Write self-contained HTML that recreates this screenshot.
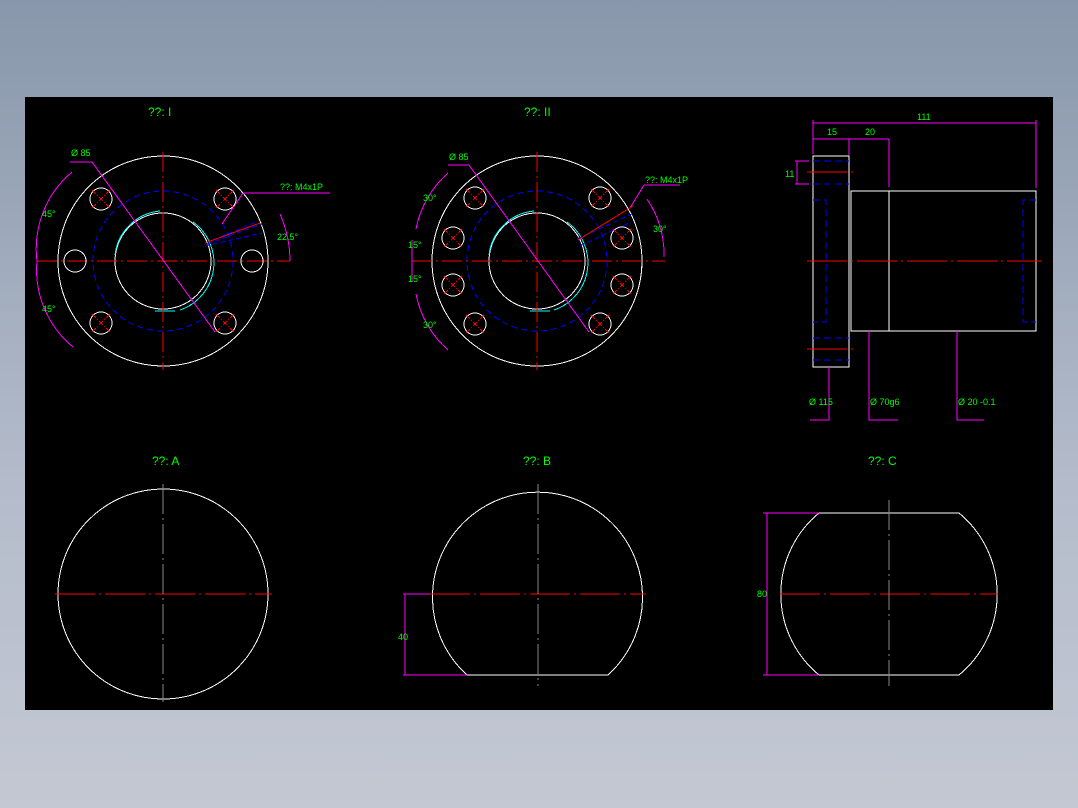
<!DOCTYPE html>
<html><head><style>
html,body{margin:0;padding:0;width:1078px;height:808px;overflow:hidden;background:linear-gradient(#8897ab,#b4bccb 60%,#c3c8d3);}
svg{position:absolute;left:0;top:0}
text{font-family:"Liberation Sans",sans-serif;fill:#00ff00;font-size:9px}
.t{font-size:12px}
</style></head><body>
<svg width="1078" height="808" viewBox="0 0 1078 808" shape-rendering="crispEdges">
<rect x="25" y="97" width="1028" height="613" fill="#000"/>
<defs>
<g id="hole"><circle r="11" fill="none" stroke="#fff"/><path d="M-9 -9L9 9M9 -9L-9 9" stroke="#f00" stroke-dasharray="5 2 1 2"/></g>
</defs>
<!-- View I -->
<text class="t" x="148" y="116">??: I</text>
<g fill="none">
<circle cx="163" cy="261" r="105" stroke="#fff"/>
<circle cx="163" cy="261" r="70" stroke="#00f" stroke-dasharray="6 4"/>
<circle cx="163" cy="261" r="48" stroke="#fff"/>
<path d="M115 255A50 50 0 0 1 160 211M193 222A50 50 0 0 1 180 310 M155 311L175 311" stroke="#0ff"/>
<path d="M37 261H290M163 152V370" stroke="#f00" stroke-dasharray="20 4 2 4"/>
<path d="M70 162H92L215 332" stroke="#f0f"/>
<path d="M72 172A100 100 0 0 0 37 261A100 100 0 0 0 73 347" stroke="#f0f"/>
<path d="M243 193H330M243 193L222 224" stroke="#f0f"/>
<path d="M280 214A120 120 0 0 1 290 261" stroke="#f0f"/>
<path d="M207 244L262 224M205 246L262 233M213 240L256 222" stroke="#00f" stroke-dasharray="5 3"/>
<path d="M205 243L260 223" stroke="#f00"/>
</g>
<use href="#hole" x="101" y="199"/><use href="#hole" x="225" y="199"/>
<use href="#hole" x="101" y="323"/><use href="#hole" x="225" y="323"/>
<g fill="none" stroke="#fff"><circle cx="75" cy="261" r="11"/><circle cx="252" cy="261" r="11"/></g>
<text x="71" y="156">Ø 85</text>
<text x="280" y="190">??: M4x1P</text>
<text x="277" y="240">22.5°</text>
<text x="42" y="217">45°</text><text x="42" y="312">45°</text>
<!-- View II -->
<text class="t" x="524" y="116">??: II</text>
<g fill="none">
<circle cx="537" cy="261" r="105" stroke="#fff"/>
<circle cx="537" cy="261" r="70" stroke="#00f" stroke-dasharray="6 4"/>
<circle cx="537" cy="261" r="48" stroke="#fff"/>
<path d="M489 255A50 50 0 0 1 534 211M567 222A50 50 0 0 1 554 310M530 311L550 311" stroke="#0ff"/>
<path d="M412 261H665M537 152V370" stroke="#f00" stroke-dasharray="20 4 2 4"/>
<path d="M448 165H469L589 332" stroke="#f0f"/>
<path d="M448 173A100 100 0 0 0 416 229M412 240V282M416 294A100 100 0 0 0 448 350" stroke="#f0f"/>
<path d="M644 185H680M644 185L630 208M647 199A100 100 0 0 1 664 257" stroke="#f0f"/>
<path d="M577 239L632 214M580 246L631 222" stroke="#00f" stroke-dasharray="5 3"/>
<path d="M578 240L633 206" stroke="#f00"/>
</g>
<use href="#hole" x="475" y="198"/><use href="#hole" x="600" y="198"/>
<use href="#hole" x="475" y="324"/><use href="#hole" x="600" y="324"/>
<use href="#hole" x="453" y="238"/><use href="#hole" x="622" y="238"/>
<use href="#hole" x="453" y="285"/><use href="#hole" x="622" y="285"/>
<text x="449" y="160">Ø 85</text>
<text x="645" y="183">??: M4x1P</text>
<text x="423" y="201">30°</text><text x="423" y="328">30°</text>
<text x="408" y="248">15°</text><text x="408" y="282">15°</text>
<text x="653" y="232">30°</text>
<!-- Side view -->
<g fill="none">
<rect x="813" y="156" width="36" height="211" stroke="#fff"/>
<rect x="851" y="191" width="185" height="140" stroke="#fff"/>
<path d="M889 191V331" stroke="#fff"/>
<path d="M813 161H849M813 184H849M813 338H849M813 360H849M813 200H826V322H813M1036 200H1023V322H1036" stroke="#00f" stroke-dasharray="7 4"/>
<path d="M807 172H855M807 349H855M807 261H1042" stroke="#f00" stroke-dasharray="40 4 2 4"/>
<path d="M813 123H1036M813 139H889M813 120V154M849 139V155M889 139V187M1036 120V188M795 161H809M795 184H809M797 161V184M829 367V420H810M869 331V420H898M957 331V420H984" stroke="#f0f"/>
</g>
<text x="917" y="120">111</text><text x="827" y="135">15</text><text x="865" y="135">20</text>
<text x="785" y="177">11</text>
<text x="809" y="405">Ø 115</text><text x="870" y="405">Ø 70g6</text><text x="958" y="405">Ø 20 -0.1</text>
<!-- Bottom views -->
<text class="t" x="152" y="465">??: A</text>
<text class="t" x="523" y="465">??: B</text>
<text class="t" x="868" y="465">??: C</text>
<g fill="none" stroke="#fff">
<circle cx="163" cy="594" r="105"/>
<path d="M467 675A105 105 0 1 1 608 675Z"/>
<path d="M819 513H959A105 105 0 0 1 959 675H819A105 105 0 0 1 819 513Z"/>
</g>
<g stroke="#f00" fill="none" stroke-dasharray="40 4 2 4">
<path d="M55 594H272M430 594H646M780 594H998"/>
</g>
<g stroke="#888" fill="none" stroke-dasharray="30 4 2 4">
<path d="M163 484V702M538 484V686M889 500V686"/>
</g>
<g stroke="#f0f" fill="none">
<path d="M403 594H430M403 675H467M405 594V675"/>
<path d="M763 513H819M763 675H819M767 513V675"/>
</g>
<text x="398" y="640">40</text><text x="757" y="597">80</text>
</svg>
</body></html>
